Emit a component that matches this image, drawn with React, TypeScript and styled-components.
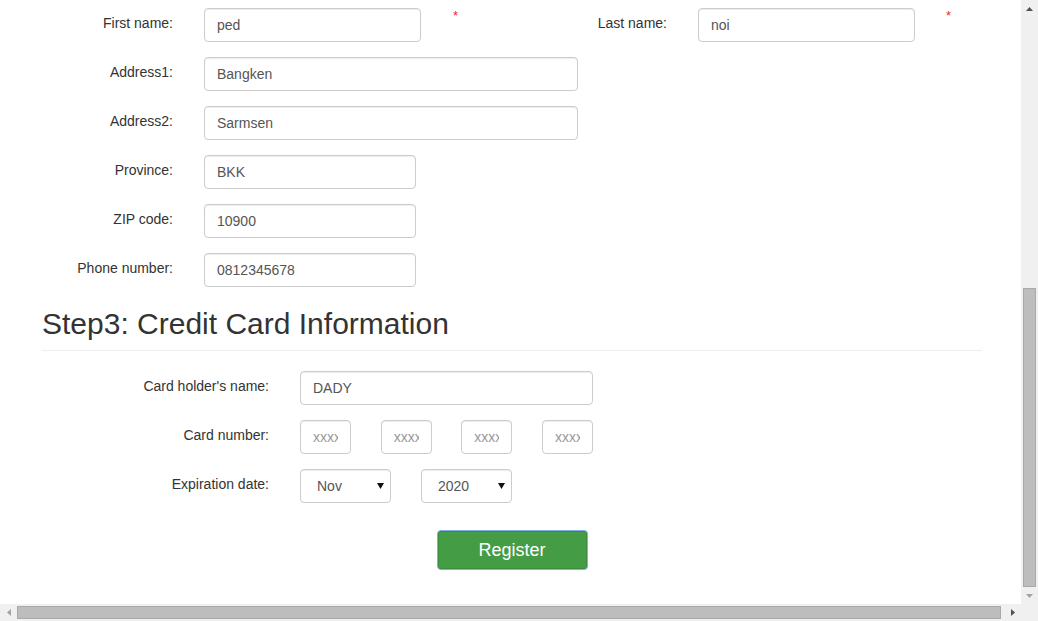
import React from 'react';
import styled, { createGlobalStyle } from 'styled-components';

const GlobalStyle = createGlobalStyle`
  html, body {
    margin: 0;
    padding: 0;
    overflow: hidden;
    background: #fff;
  }
  * {
    box-sizing: border-box;
  }
`;

const Frame = styled.div`
  display: grid;
  grid-template-columns: 1021px 17px;
  grid-template-rows: 604px 17px;
  width: 1038px;
  height: 621px;
  font-family: 'Liberation Sans', Arial, Helvetica, sans-serif;
  font-size: 14px;
  color: #333;
`;

const Viewport = styled.div`
  overflow: hidden;
  background: #fff;
  padding-top: 8px;
`;

const Container = styled.div`
  width: 940px;
  margin-left: 42px;
`;

const Row = styled.div`
  display: flex;
  align-items: flex-start;
  margin-bottom: 15px;
`;

const Label = styled.label<{ $w: number }>`
  width: ${(p) => p.$w}px;
  flex-shrink: 0;
  margin-right: 31px;
  padding-top: 5px;
  line-height: 20px;
  text-align: right;
  color: #333;
`;

const TextInput = styled.input<{ $w: number }>`
  width: ${(p) => p.$w}px;
  height: 34px;
  padding: 6px 12px;
  border: 1px solid #ccc;
  border-radius: 4px;
  box-shadow: inset 0 1px 1px rgba(0, 0, 0, 0.075);
  font-family: inherit;
  font-size: 14px;
  line-height: 20px;
  color: #555;
  background: #fff;
  outline: none;
  &::placeholder {
    color: #999;
  }
`;

const Star = styled.span<{ $w: number; $pad: number }>`
  width: ${(p) => p.$w}px;
  flex-shrink: 0;
  padding-left: ${(p) => p.$pad}px;
  line-height: 16px;
  color: #f22;
  font-size: 13px;
`;

const Heading = styled.h2`
  margin: 20px 0 20px;
  padding-bottom: 10px;
  border-bottom: 1px solid #eee;
  font-size: 30px;
  font-weight: 500;
  line-height: 33px;
  color: #333;
`;

const CardGroup = styled.div`
  display: flex;
  justify-content: space-between;
  width: 293px;
`;

const SelectGroup = styled.div`
  display: flex;
  gap: 30px;
`;

const SelectWrap = styled.div`
  position: relative;
  width: 91px;
  height: 34px;
`;

const Select = styled.select`
  appearance: none;
  width: 100%;
  height: 34px;
  padding: 6px 16px;
  border: 1px solid #ccc;
  border-radius: 4px;
  box-shadow: inset 0 1px 1px rgba(0, 0, 0, 0.075);
  background: #fff;
  font-family: inherit;
  font-size: 14px;
  color: #555;
  outline: none;
`;

const Caret = styled.svg`
  position: absolute;
  right: 7px;
  top: 14px;
  pointer-events: none;
`;

const ButtonRow = styled.div`
  display: flex;
  justify-content: center;
  margin-top: 27px;
`;

const RegisterButton = styled.button`
  width: 151px;
  height: 40px;
  border: 1px solid #80aee8;
  border-radius: 4px;
  box-shadow: inset 0 0 0 1px #3d8b3d;
  background: #449d44;
  color: #fff;
  font-family: inherit;
  font-size: 18px;
  cursor: pointer;
`;

const VBar = styled.div`
  display: flex;
  flex-direction: column;
  background: #f0f0f0;
`;

const HBar = styled.div`
  display: flex;
  background: #f0f0f0;
`;

const Corner = styled.div`
  background: #f0f0f0;
`;

const ArrowBox = styled.div`
  width: 17px;
  height: 17px;
  flex-shrink: 0;
  display: flex;
  align-items: center;
  justify-content: center;
`;

const VTrack = styled.div`
  flex: 1;
  display: flex;
  flex-direction: column;
  justify-content: flex-end;
  padding-left: 2px;
`;

const HTrack = styled.div`
  flex: 1;
  display: flex;
  padding-top: 2px;
`;

const Thumb = styled.div<{ $w: number; $h: number }>`
  width: ${(p) => p.$w}px;
  height: ${(p) => p.$h}px;
  background: #bdbdbd;
  border: 1px solid #a9a9a9;
`;

type Dir = 'up' | 'down' | 'left' | 'right';

const Arrow = ({ dir, color }: { dir: Dir; color: string }) => {
  const pts: Record<Dir, string> = {
    up: '0,4 7,4 3.5,0',
    down: '0,0 7,0 3.5,4',
    left: '4,0 4,7 0,3.5',
    right: '0,0 0,7 4,3.5',
  };
  const vertical = dir === 'up' || dir === 'down';
  return (
    <ArrowBox>
      <svg width={vertical ? 7 : 4} height={vertical ? 4 : 7}>
        <polygon points={pts[dir]} fill={color} />
      </svg>
    </ArrowBox>
  );
};

const DropSelect = ({ value, options }: { value: string; options: string[] }) => (
  <SelectWrap>
    <Select defaultValue={value}>
      {options.map((o) => (
        <option key={o}>{o}</option>
      ))}
    </Select>
    <Caret width="7" height="6">
      <polygon points="0,0 7,0 3.5,6" fill="#111" />
    </Caret>
  </SelectWrap>
);

const months = ['Jan', 'Feb', 'Mar', 'Apr', 'May', 'Jun', 'Jul', 'Aug', 'Sep', 'Oct', 'Nov', 'Dec'];
const years = ['2018', '2019', '2020', '2021', '2022', '2023'];

const addressRows = [
  { label: 'Address1:', value: 'Bangken', w: 374 },
  { label: 'Address2:', value: 'Sarmsen', w: 374 },
  { label: 'Province:', value: 'BKK', w: 212 },
  { label: 'ZIP code:', value: '10900', w: 212 },
  { label: 'Phone number:', value: '0812345678', w: 212 },
];

export default function App() {
  return (
    <>
      <GlobalStyle />
      <Frame>
        <Viewport>
          <Container>
            <Row>
              <Label $w={131}>First name:</Label>
              <TextInput $w={217} defaultValue="ped" />
              <Star $w={115} $pad={32}>*</Star>
              <Label $w={131}>Last name:</Label>
              <TextInput $w={217} defaultValue="noi" />
              <Star $w={40} $pad={31}>*</Star>
            </Row>
            {addressRows.map((r) => (
              <Row key={r.label}>
                <Label $w={131}>{r.label}</Label>
                <TextInput $w={r.w} defaultValue={r.value} />
              </Row>
            ))}

            <Heading>Step3: Credit Card Information</Heading>

            <Row>
              <Label $w={227}>Card holder's name:</Label>
              <TextInput $w={293} defaultValue="DADY" />
            </Row>
            <Row>
              <Label $w={227}>Card number:</Label>
              <CardGroup>
                <TextInput $w={51} placeholder="xxxx" />
                <TextInput $w={51} placeholder="xxxx" />
                <TextInput $w={51} placeholder="xxxx" />
                <TextInput $w={51} placeholder="xxxx" />
              </CardGroup>
            </Row>
            <Row>
              <Label $w={227}>Expiration date:</Label>
              <SelectGroup>
                <DropSelect value="Nov" options={months} />
                <DropSelect value="2020" options={years} />
              </SelectGroup>
            </Row>
            <ButtonRow>
              <RegisterButton type="button">Register</RegisterButton>
            </ButtonRow>
          </Container>
        </Viewport>

        <VBar>
          <Arrow dir="up" color="#505050" />
          <VTrack>
            <Thumb $w={13} $h={299} />
          </VTrack>
          <Arrow dir="down" color="#a3a3a3" />
        </VBar>

        <HBar>
          <Arrow dir="left" color="#a3a3a3" />
          <HTrack>
            <Thumb $w={984} $h={13} />
          </HTrack>
          <Arrow dir="right" color="#505050" />
        </HBar>
        <Corner />
      </Frame>
    </>
  );
}
